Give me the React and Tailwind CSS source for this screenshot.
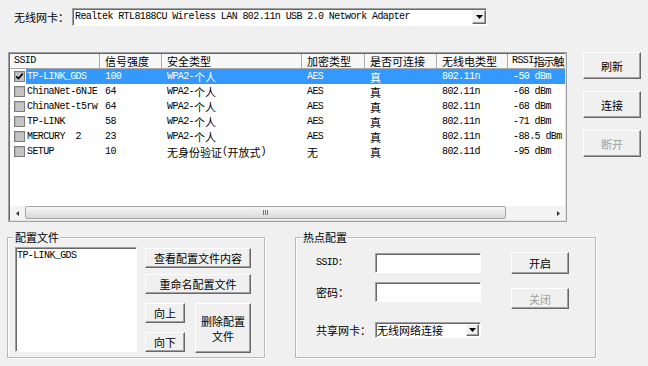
import React from "react";

const mono = "font-['Liberation_Mono',monospace] text-[10px] tracking-[-0.6px] leading-[14px]";
const cjk = "font-['Noto_Sans_CJK_SC',sans-serif] text-[11px] leading-[14px]";

const Txt = ({ s }) => {
  const parts = s.match(/[\x00-\x7f]+|[^\x00-\x7f]+/g) || [];
  return (
    <>
      {parts.map((p, i) => (
        <span key={i} className={/^[\x00-\x7f]/.test(p) ? mono : cjk}>
          {p}
        </span>
      ))}
    </>
  );
};

const Btn = ({ children, cls, disabled }) => (
  <div
    className={`flex items-center justify-center text-center bg-[#f0f0f0] border border-t-white border-l-white border-r-[#696969] border-b-[#696969] shadow-[inset_-1px_-1px_#a0a0a0] ${
      disabled ? "text-[#a0a0a0]" : "text-black"
    } ${cls}`}
  >
    {children}
  </div>
);

const sunken =
  "bg-white border border-t-[#a0a0a0] border-l-[#a0a0a0] border-r-white border-b-white shadow-[inset_1px_1px_#696969]";

const ArrowBtn = ({ cls }) => (
  <div
    className={`flex items-center justify-center bg-[#f0f0f0] border border-t-[#f8f8f8] border-l-[#f8f8f8] border-r-[#696969] border-b-[#696969] shadow-[inset_-1px_-1px_#a0a0a0] ${cls}`}
  >
    <svg width="7" height="4" viewBox="0 0 7 4">
      <path d="M0 0 H7 L3.5 4 Z" fill="#000" />
    </svg>
  </div>
);

const Check = ({ checked }) => (
  <div className="w-[11px] h-[11px] border border-[#7d7d7d] bg-[#c4c4c4] shadow-[inset_1px_1px_#b0b0b0] flex items-center justify-center">
    {checked && (
      <svg width="9" height="9" viewBox="0 0 9 9">
        <path d="M1.2 4.3 L3.4 6.6 L7.8 1.6" stroke="#000" strokeWidth="1.7" fill="none" />
      </svg>
    )}
  </div>
);

const cols = [
  { w: "w-[90px]", h: "SSID" },
  { w: "w-[62px]", h: "信号强度" },
  { w: "w-[140px]", h: "安全类型" },
  { w: "w-[63px]", h: "加密类型" },
  { w: "w-[72px]", h: "是否可连接" },
  { w: "w-[71px]", h: "无线电类型" },
];
const rowCellW = ["w-[74px]", "w-[62px]", "w-[140px]", "w-[63px]", "w-[72px]", "w-[71px]", "w-[57px]"];

const rows = [
  ["TP-LINK_GDS", "100", "WPA2-个人", "AES", "真", "802.11n", "-50 dBm"],
  ["ChinaNet-6NJE", "64", "WPA2-个人", "AES", "真", "802.11n", "-68 dBm"],
  ["ChinaNet-t5rw", "64", "WPA2-个人", "AES", "真", "802.11n", "-68 dBm"],
  ["TP-LINK", "58", "WPA2-个人", "AES", "真", "802.11n", "-71 dBm"],
  ["MERCURY  2", "23", "WPA2-个人", "AES", "真", "802.11n", "-88.5 dBm"],
  ["SETUP", "10", "无身份验证(开放式)", "无", "真", "802.11d", "-95 dBm"],
];

export default function App() {
  return (
    <div className="w-[648px] h-[366px] bg-[#f0f0f0] overflow-hidden flex flex-col text-black">
      {/* top row */}
      <div className="flex items-center mt-[8px] pl-[14px] h-[18px]">
        <div className="w-[58px] flex items-center">
          <Txt s="无线网卡：" />
        </div>
        <div className={`w-[415px] h-[18px] flex items-center ${sunken}`}>
          <div className="flex-1 flex items-center pl-[2px] whitespace-pre overflow-hidden">
            <Txt s="Realtek RTL8188CU Wireless LAN 802.11n USB 2.0 Network Adapter" />
          </div>
          <ArrowBtn cls="w-[14px] h-[14px]" />
        </div>
      </div>

      {/* middle row */}
      <div className="flex items-start mt-[26px]">
        <div className="ml-[8px] w-[559px] h-[170px] border border-[#a0a0a0]">
          <div className="w-full h-full flex flex-col bg-white border border-t-[#696969] border-l-[#696969] border-r-[#e3e3e3] border-b-[#e3e3e3] overflow-hidden">
            {/* header */}
            <div className="flex h-[15px] shrink-0 bg-[#f7f7f7] border-b border-[#a8a8a8]">
              {cols.map((c, i) => (
                <div
                  key={i}
                  className={`flex items-center shrink-0 overflow-hidden whitespace-pre border-r border-[#a8a8a8] shadow-[inset_1px_0_#fff] ${
                    i === 0 ? "pl-[4px]" : "pl-[5px]"
                  } ${c.w}`}
                >
                  <Txt s={c.h} />
                </div>
              ))}
              <div className="flex items-center flex-1 overflow-hidden whitespace-pre pl-[4px] shadow-[inset_1px_0_#fff]">
                <span className={mono}>RSSI</span>
                <span className={`${cjk} tracking-[-1px]`}>指示触</span>
              </div>
            </div>
            {/* rows */}
            <div className="flex-1 flex flex-col">
              {rows.map((r, ri) => (
                <div key={ri} className="flex h-[15px] shrink-0">
                  <div className="w-[16px] shrink-0 flex items-center pl-[4px]">
                    <Check checked={ri === 0} />
                  </div>
                  <div
                    className={`flex flex-1 overflow-hidden ${
                      ri === 0 ? "bg-[#3399ff] text-white" : "text-black"
                    }`}
                  >
                    {r.map((v, ci) => (
                      <div
                        key={ci}
                        className={`flex items-center shrink-0 overflow-hidden whitespace-pre ${
                          ci === 0 ? "pl-[1px]" : "pl-[5px]"
                        } ${rowCellW[ci]}`}
                      >
                        <Txt s={v} />
                      </div>
                    ))}
                  </div>
                </div>
              ))}
            </div>
            {/* scrollbar */}
            <div className="flex h-[14px] shrink-0 bg-[#f3f3f3]">
              <div className="w-[15px] flex items-center justify-center">
                <svg width="3" height="5" viewBox="0 0 3 5">
                  <path d="M3 0 V5 L0 2.5 Z" fill="#333" />
                </svg>
              </div>
              <div className="w-[481px] h-[13px] rounded-[2px] border border-[#a6a6a6] bg-gradient-to-b from-[#f6f6f6] to-[#dadada] flex items-center justify-center">
                <div className="flex gap-[1px]">
                  <div className="w-[1px] h-[5px] bg-[#777]" />
                  <div className="w-[1px] h-[5px] bg-[#777]" />
                  <div className="w-[1px] h-[5px] bg-[#777]" />
                </div>
              </div>
              <div className="flex-1" />
              <div className="w-[14px] flex items-center justify-center">
                <svg width="3" height="5" viewBox="0 0 3 5">
                  <path d="M0 0 V5 L3 2.5 Z" fill="#333" />
                </svg>
              </div>
            </div>
          </div>
        </div>

        <div className="ml-[16px] flex flex-col gap-[12px]">
          <Btn cls="w-[58px] h-[27px]">
            <Txt s="刷新" />
          </Btn>
          <Btn cls="w-[58px] h-[27px]">
            <Txt s="连接" />
          </Btn>
          <Btn cls="w-[58px] h-[27px]" disabled>
            <Txt s="断开" />
          </Btn>
        </div>
      </div>

      {/* bottom row */}
      <div className="flex mt-[15px]">
        {/* 配置文件 */}
        <div className="ml-[7px] w-[258px] h-[121px] relative border border-[#b8b8b8] shadow-[inset_1px_1px_#fff,1px_1px_#fff]">
          <div className="absolute -top-[8px] left-[6px] px-[1px] bg-[#f0f0f0] flex items-center">
            <Txt s="配置文件" />
          </div>
          <div className="flex pt-[9px] pl-[7px]">
            <div className={`w-[122px] h-[105px] ${sunken} pl-[1px] pt-[1px]`}>
              <div className="flex items-center whitespace-pre">
                <Txt s="TP-LINK_GDS" />
              </div>
            </div>
            <div className="ml-[8px] mt-[1px] flex flex-col w-[106px]">
              <Btn cls="w-[106px] h-[20px]">
                <Txt s="查看配置文件内容" />
              </Btn>
              <Btn cls="w-[106px] h-[20px] mt-[6px]">
                <Txt s="重命名配置文件" />
              </Btn>
              <div className="flex mt-[9px]">
                <div className="flex flex-col w-[40px]">
                  <Btn cls="w-[40px] h-[20px]">
                    <Txt s="向上" />
                  </Btn>
                  <Btn cls="w-[40px] h-[20px] mt-[9px]">
                    <Txt s="向下" />
                  </Btn>
                </div>
                <Btn cls="ml-[10px] w-[56px] h-[50px] flex-col gap-[1px]">
                  <div className="flex h-[14px] items-center">
                    <Txt s="删除配置" />
                  </div>
                  <div className="flex h-[14px] items-center">
                    <Txt s="文件" />
                  </div>
                </Btn>
              </div>
            </div>
          </div>
        </div>

        {/* 热点配置 */}
        <div className="ml-[30px] w-[301px] h-[121px] relative border border-[#b8b8b8] shadow-[inset_1px_1px_#fff,1px_1px_#fff]">
          <div className="absolute -top-[8px] left-[6px] px-[1px] bg-[#f0f0f0] flex items-center">
            <Txt s="热点配置" />
          </div>
          <div className="flex pt-[14px] pl-[20px]">
            <div className="flex flex-col">
              <div className="flex items-center mt-[1px] h-[20px]">
                <div className="w-[59px] flex items-center">
                  <Txt s="SSID:" />
                </div>
                <div className={`w-[106px] h-[20px] ${sunken}`} />
              </div>
              <div className="flex items-center mt-[9px] h-[20px]">
                <div className="w-[59px] flex items-center">
                  <Txt s="密码：" />
                </div>
                <div className={`w-[106px] h-[20px] ${sunken}`} />
              </div>
              <div className="flex items-center mt-[20px] h-[16px]">
                <div className="w-[59px] flex items-center">
                  <Txt s="共享网卡：" />
                </div>
                <div className={`w-[106px] h-[16px] flex items-center ${sunken}`}>
                  <div className="flex-1 flex items-center pl-[1px] whitespace-pre overflow-hidden">
                    <Txt s="无线网络连接" />
                  </div>
                  <ArrowBtn cls="w-[13px] h-[12px] mr-[1px]" />
                </div>
              </div>
            </div>
            <div className="ml-[30px] flex flex-col">
              <Btn cls="w-[58px] h-[22px]">
                <Txt s="开启" />
              </Btn>
              <Btn cls="w-[58px] h-[21px] mt-[14px]" disabled>
                <Txt s="关闭" />
              </Btn>
            </div>
          </div>
        </div>
      </div>
    </div>
  );
}
